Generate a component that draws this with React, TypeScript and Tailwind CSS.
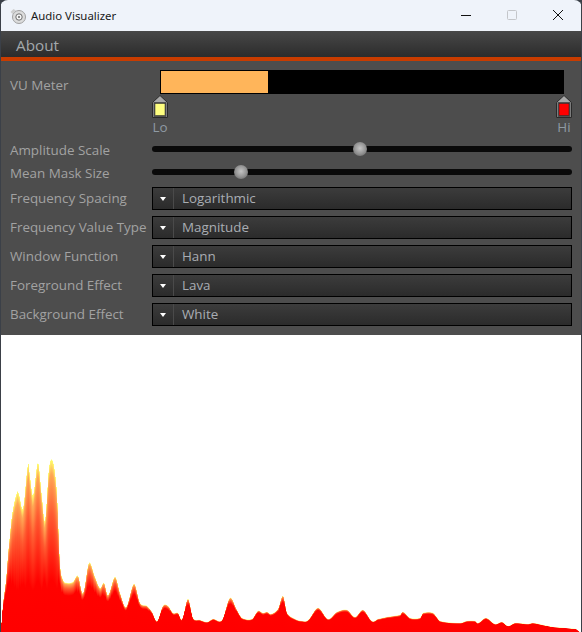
import React from 'react';

const FONT = "font-['Open_Sans','Noto_Sans',sans-serif]";

// outline of the spectrum, [x, y] in page pixels
const spectrum: [number, number][] = [
  [0, 632], [1, 627], [3, 603], [6, 580], [8, 553], [12, 515], [17, 493], [19, 495], [23, 508], [28, 465], [30, 477], [33, 495],
  [38, 463], [42, 497], [45, 520], [49, 468], [53, 462], [57, 493], [60, 563], [63, 580], [67, 583], [73, 582],
  [78, 576], [83, 593], [89, 563], [95, 577], [100, 588], [104, 583], [108, 595], [115, 577], [120, 593], [126, 607],
  [134, 584], [140, 603], [147, 606], [152, 612], [157, 621], [163, 606], [168, 606], [173, 613], [178, 613],
  [182, 619], [188, 599], [193, 618], [200, 620], [207, 622], [213, 619], [222, 620], [230, 598], [237, 610],
  [242, 618], [252, 619], [258, 611], [263, 613], [267, 612], [271, 614], [278, 609], [283, 596], [287, 613],
  [295, 619], [302, 621], [308, 620], [318, 608], [328, 619], [337, 612], [347, 610], [355, 617], [363, 610],
  [372, 621], [378, 619], [387, 617], [400, 615], [403, 612], [410, 618], [420, 618], [423, 613], [433, 613],
  [440, 621], [460, 623], [467, 621], [475, 621], [478, 623], [486, 618], [495, 624], [502, 622], [508, 626],
  [515, 623], [528, 624], [533, 623], [543, 625], [553, 627], [576, 629], [580, 632], [582, 632],
];

// catmull-rom through the outline so the peaks come out round
const heightAt = (x: number) => {
  for (let i = 0; i < spectrum.length - 1; i++) {
    const [x1, y1] = spectrum[i];
    const [x2, y2] = spectrum[i + 1];
    if (x >= x1 && x <= x2) {
      const y0 = spectrum[Math.max(i - 1, 0)][1];
      const y3 = spectrum[Math.min(i + 2, spectrum.length - 1)][1];
      const t = (x - x1) / (x2 - x1);
      const y = 0.5 * (2 * y1 + (y2 - y0) * t + (2 * y0 - 5 * y1 + 4 * y2 - y3) * t * t + (3 * y1 - y0 - 3 * y2 + y3) * t * t * t);
      return Math.min(y, 632);
    }
  }
  return 632;
};

const columns = Array.from({ length: 580 }, (_, i) => i + 1);

// the taller the column, the longer its fade out of red
const BIN = 8;
const bins = Array.from({ length: 24 }, (_, i) => i);
const redEnd = (h: number) => Math.min(0.9, Math.max(0.3, 1 - h / 200));

const Spectrum = () => (
  <svg width="580" height="297" viewBox="1 335 580 297" className="block">
    <defs>
      {bins.map((i) => {
        const r = redEnd((i + 0.5) * BIN);
        return (
          <linearGradient key={i} id={`lava${i}`} x1="0" y1="1" x2="0" y2="0">
            <stop offset="0" stopColor="#ff0000" />
            <stop offset={r} stopColor="#ff0200" />
            <stop offset={r + (1 - r) * 0.55} stopColor="#ff5a30" />
            <stop offset={r + (1 - r) * 0.88} stopColor="#ffa855" />
            <stop offset="1" stopColor="#ffff70" />
          </linearGradient>
        );
      })}
    </defs>
    {columns.map((x) => {
      const top = heightAt(x + 0.5);
      const h = Math.max(632 - top, 0.01);
      const bin = Math.min(bins.length - 1, Math.floor(h / BIN));
      return <rect key={x} x={x} y={top} width="1.02" height={h} fill={`url(#lava${bin})`} />;
    })}
  </svg>
);

const Marker = ({ color, label }: { color: string; label: string }) => (
  <div className="flex w-4 flex-col items-center">
    <svg width="16" height="23" viewBox="0 0 16 23" className="block">
      <path d="M8 .5 15.5 7.5V22.5H.5V7.5Z" fill="#a8a8a8" stroke="#2a2a2a" />
      <rect x="1.5" y="7" width="13" height="15" fill="#505050" />
      <rect x="3" y="8.5" width="10" height="12" fill={color} stroke="#222" strokeWidth="0.5" />
    </svg>
    <span className="text-[13.4px] leading-[19px] text-[#8f9aa3]">{label}</span>
  </div>
);

const Slider = ({ label, thumb }: { label: string; thumb: number }) => (
  <div className="flex h-[23px] items-start">
    <span className="mt-[1px] w-[142px] shrink-0 text-[13.4px] leading-[23px] text-[#a2a2a2]">{label}</span>
    <div className="relative mt-[8px] h-[6px] w-[420px] rounded-full bg-[#0a0a0a]">
      <div
        className="absolute top-[-4px] h-[14px] w-[14px] -translate-x-1/2 rounded-full bg-[radial-gradient(circle_at_50%_45%,#c4c4c4,#969696_50%,#5c5c5c)]"
        style={{ left: thumb }}
      />
    </div>
  </div>
);

const Combo = ({ label, value }: { label: string; value: string }) => (
  <div className="flex h-[23px] items-center">
    <span className="w-[142px] shrink-0 whitespace-nowrap text-[13.4px] text-[#a2a2a2]">{label}</span>
    <div className="flex h-[23px] w-[420px] border border-black bg-gradient-to-b from-[#3c3c3c] to-[#2b2b2b]">
      <div className="flex w-[21px] items-center justify-center border-r border-[#4a4a4a]">
        <span className="h-0 w-0 border-x-[3.5px] border-t-[4px] border-x-transparent border-t-white" />
      </div>
      <span className="pl-2 text-[13.4px] leading-[21px] text-[#a9adb3]">{value}</span>
    </div>
  </div>
);

const App: React.FC = () => {
  return (
    <div className={`h-[632px] w-[582px] overflow-hidden bg-[#3b4048] ${FONT}`}>
      <div className="flex h-full flex-col overflow-hidden rounded-t-lg pl-[1px] pr-[1px]">
        {/* title bar */}
        <div className="flex h-[31px] items-center bg-[#eff3fa] pl-[8px]">
          <svg width="18" height="18" viewBox="0 0 18 18" className="shrink-0">
            <circle cx="10" cy="10" r="6.5" fill="#dcdcdc" stroke="#a0a0a0" />
            <circle cx="10" cy="10" r="3.2" fill="#f4f4f4" stroke="#707070" />
            <circle cx="10" cy="10" r="1" fill="#666" />
            <path d="M1.5 5 4.5 2 7 3.5 3.5 7Z" fill="#cfcfcf" />
          </svg>
          <span className="ml-[4px] font-['Noto_Sans',sans-serif] text-[11.4px] text-[#1a1a1a]">Audio Visualizer</span>
          <div className="ml-auto flex items-center">
            <svg width="46" height="31" viewBox="0 0 46 31"><path d="M18 15.5h10" stroke="#111" strokeWidth="1" /></svg>
            <svg width="46" height="31" viewBox="0 0 46 31"><rect x="18.5" y="10.5" width="9" height="9" rx="1" fill="none" stroke="#c4c6ca" /></svg>
            <svg width="46" height="31" viewBox="0 0 46 31"><path d="M18 10l10 10M28 10 18 20" stroke="#111" strokeWidth="1" /></svg>
          </div>
        </div>

        {/* menu */}
        <div className="flex h-[26px] items-center bg-gradient-to-b from-[#484848] to-[#2c2c2c] pl-[15px] pt-[3px]">
          <span className="text-[15.3px] text-[#a3a8ac]">About</span>
        </div>
        <div className="h-[4px] bg-[#c83c00]" />

        {/* controls */}
        <div className="flex h-[274px] flex-col bg-[#4d4d4d] pl-[9px] pt-[9px]">
          <div className="flex h-[24px] items-center">
            <span className="mt-[6px] w-[150px] shrink-0 text-[13.4px] text-[#a2a2a2]">VU Meter</span>
            <div className="h-[24px] w-[404px] border-y border-l border-black bg-black">
              <div className="h-full w-[107px] bg-[#ffb55a]" />
            </div>
          </div>
          <div className="ml-[142px] mt-[1px] flex h-[43px] w-[420px] justify-between">
            <Marker color="#ffff80" label="Lo" />
            <Marker color="#ff0000" label="Hi" />
          </div>
          <Slider label="Amplitude Scale" thumb={208} />
          <Slider label="Mean Mask Size" thumb={89} />
          <div className="mt-[3px] flex flex-col gap-[6px]">
            <Combo label="Frequency Spacing" value="Logarithmic" />
            <Combo label="Frequency Value Type" value="Magnitude" />
            <Combo label="Window Function" value="Hann" />
            <Combo label="Foreground Effect" value="Lava" />
            <Combo label="Background Effect" value="White" />
          </div>
        </div>

        {/* visualizer */}
        <div className="flex-1 bg-white">
          <Spectrum />
        </div>
      </div>
    </div>
  );
};

export default App;
